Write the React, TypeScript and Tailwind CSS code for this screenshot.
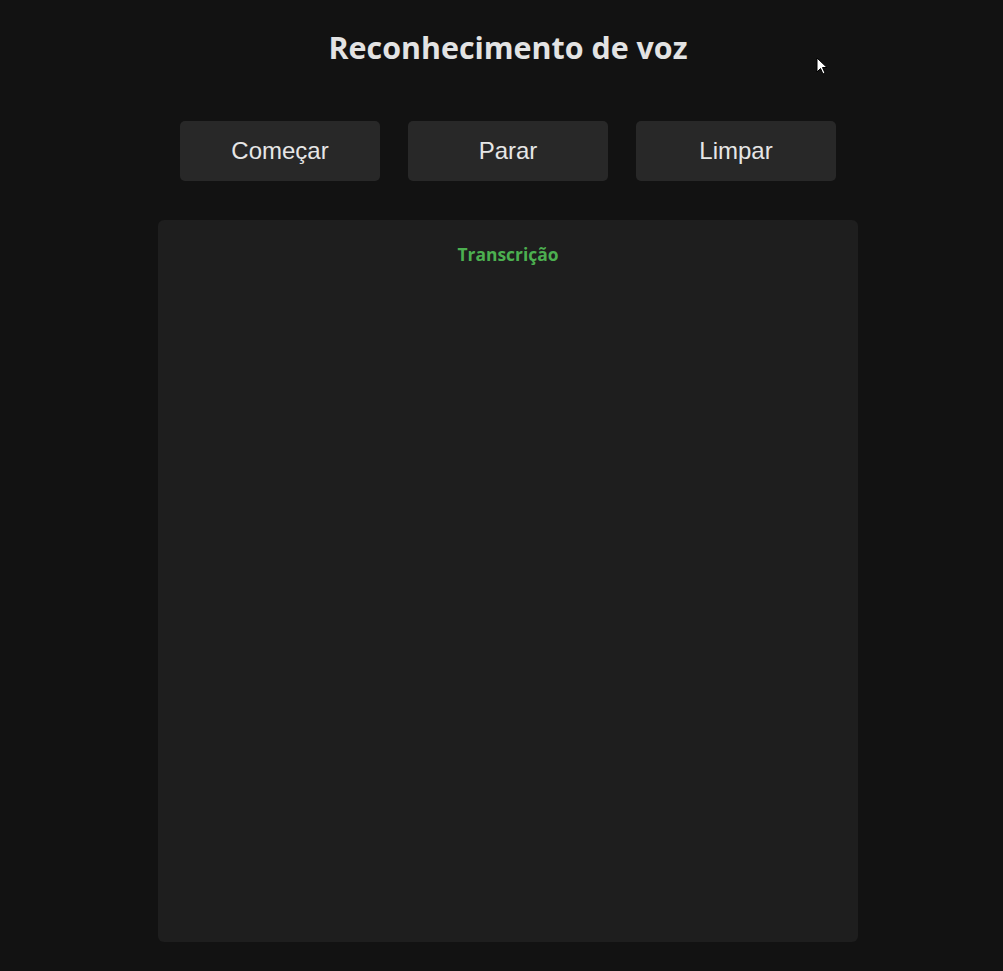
const buttons = ["Começar", "Parar", "Limpar"];

export default function App() {
  return (
    <div className="relative min-h-[971px] bg-[#121212] pl-[13px] flex flex-col items-center">
      <h1 className="mt-[28px] h-[40px] leading-[40px] text-[30.4px] font-bold text-[#e3e3e3] [font-family:'Open_Sans',sans-serif]">
        Reconhecimento de voz
      </h1>

      <div className="mt-[53px] flex gap-[28px]">
        {buttons.map((label) => (
          <button
            key={label}
            className="h-[60px] w-[200px] rounded-[5px] bg-[#282828] text-[24px] text-[#e6e6e6] [font-family:'Liberation_Sans',Arial,sans-serif]"
          >
            {label}
          </button>
        ))}
      </div>

      <section className="mt-[39px] h-[722px] w-[700px] rounded-[6px] bg-[#1e1e1e] pt-[22px]">
        <h2 className="text-center leading-[24px] text-[17.4px] font-bold text-[#4caf50] [font-family:'Open_Sans',sans-serif]">
          Transcrição
        </h2>
      </section>

      {/* mouse pointer seen in the capture */}
      <svg
        className="absolute left-[816px] top-[57px]"
        width="12"
        height="19"
        viewBox="0 0 12 19"
      >
        <path
          d="M1 1 L1 15 L4.5 11.5 L7 17 L9 16 L6.5 10.5 L11 10.5 Z"
          fill="#fff"
          stroke="#000"
          strokeWidth="1"
        />
      </svg>
    </div>
  );
}
